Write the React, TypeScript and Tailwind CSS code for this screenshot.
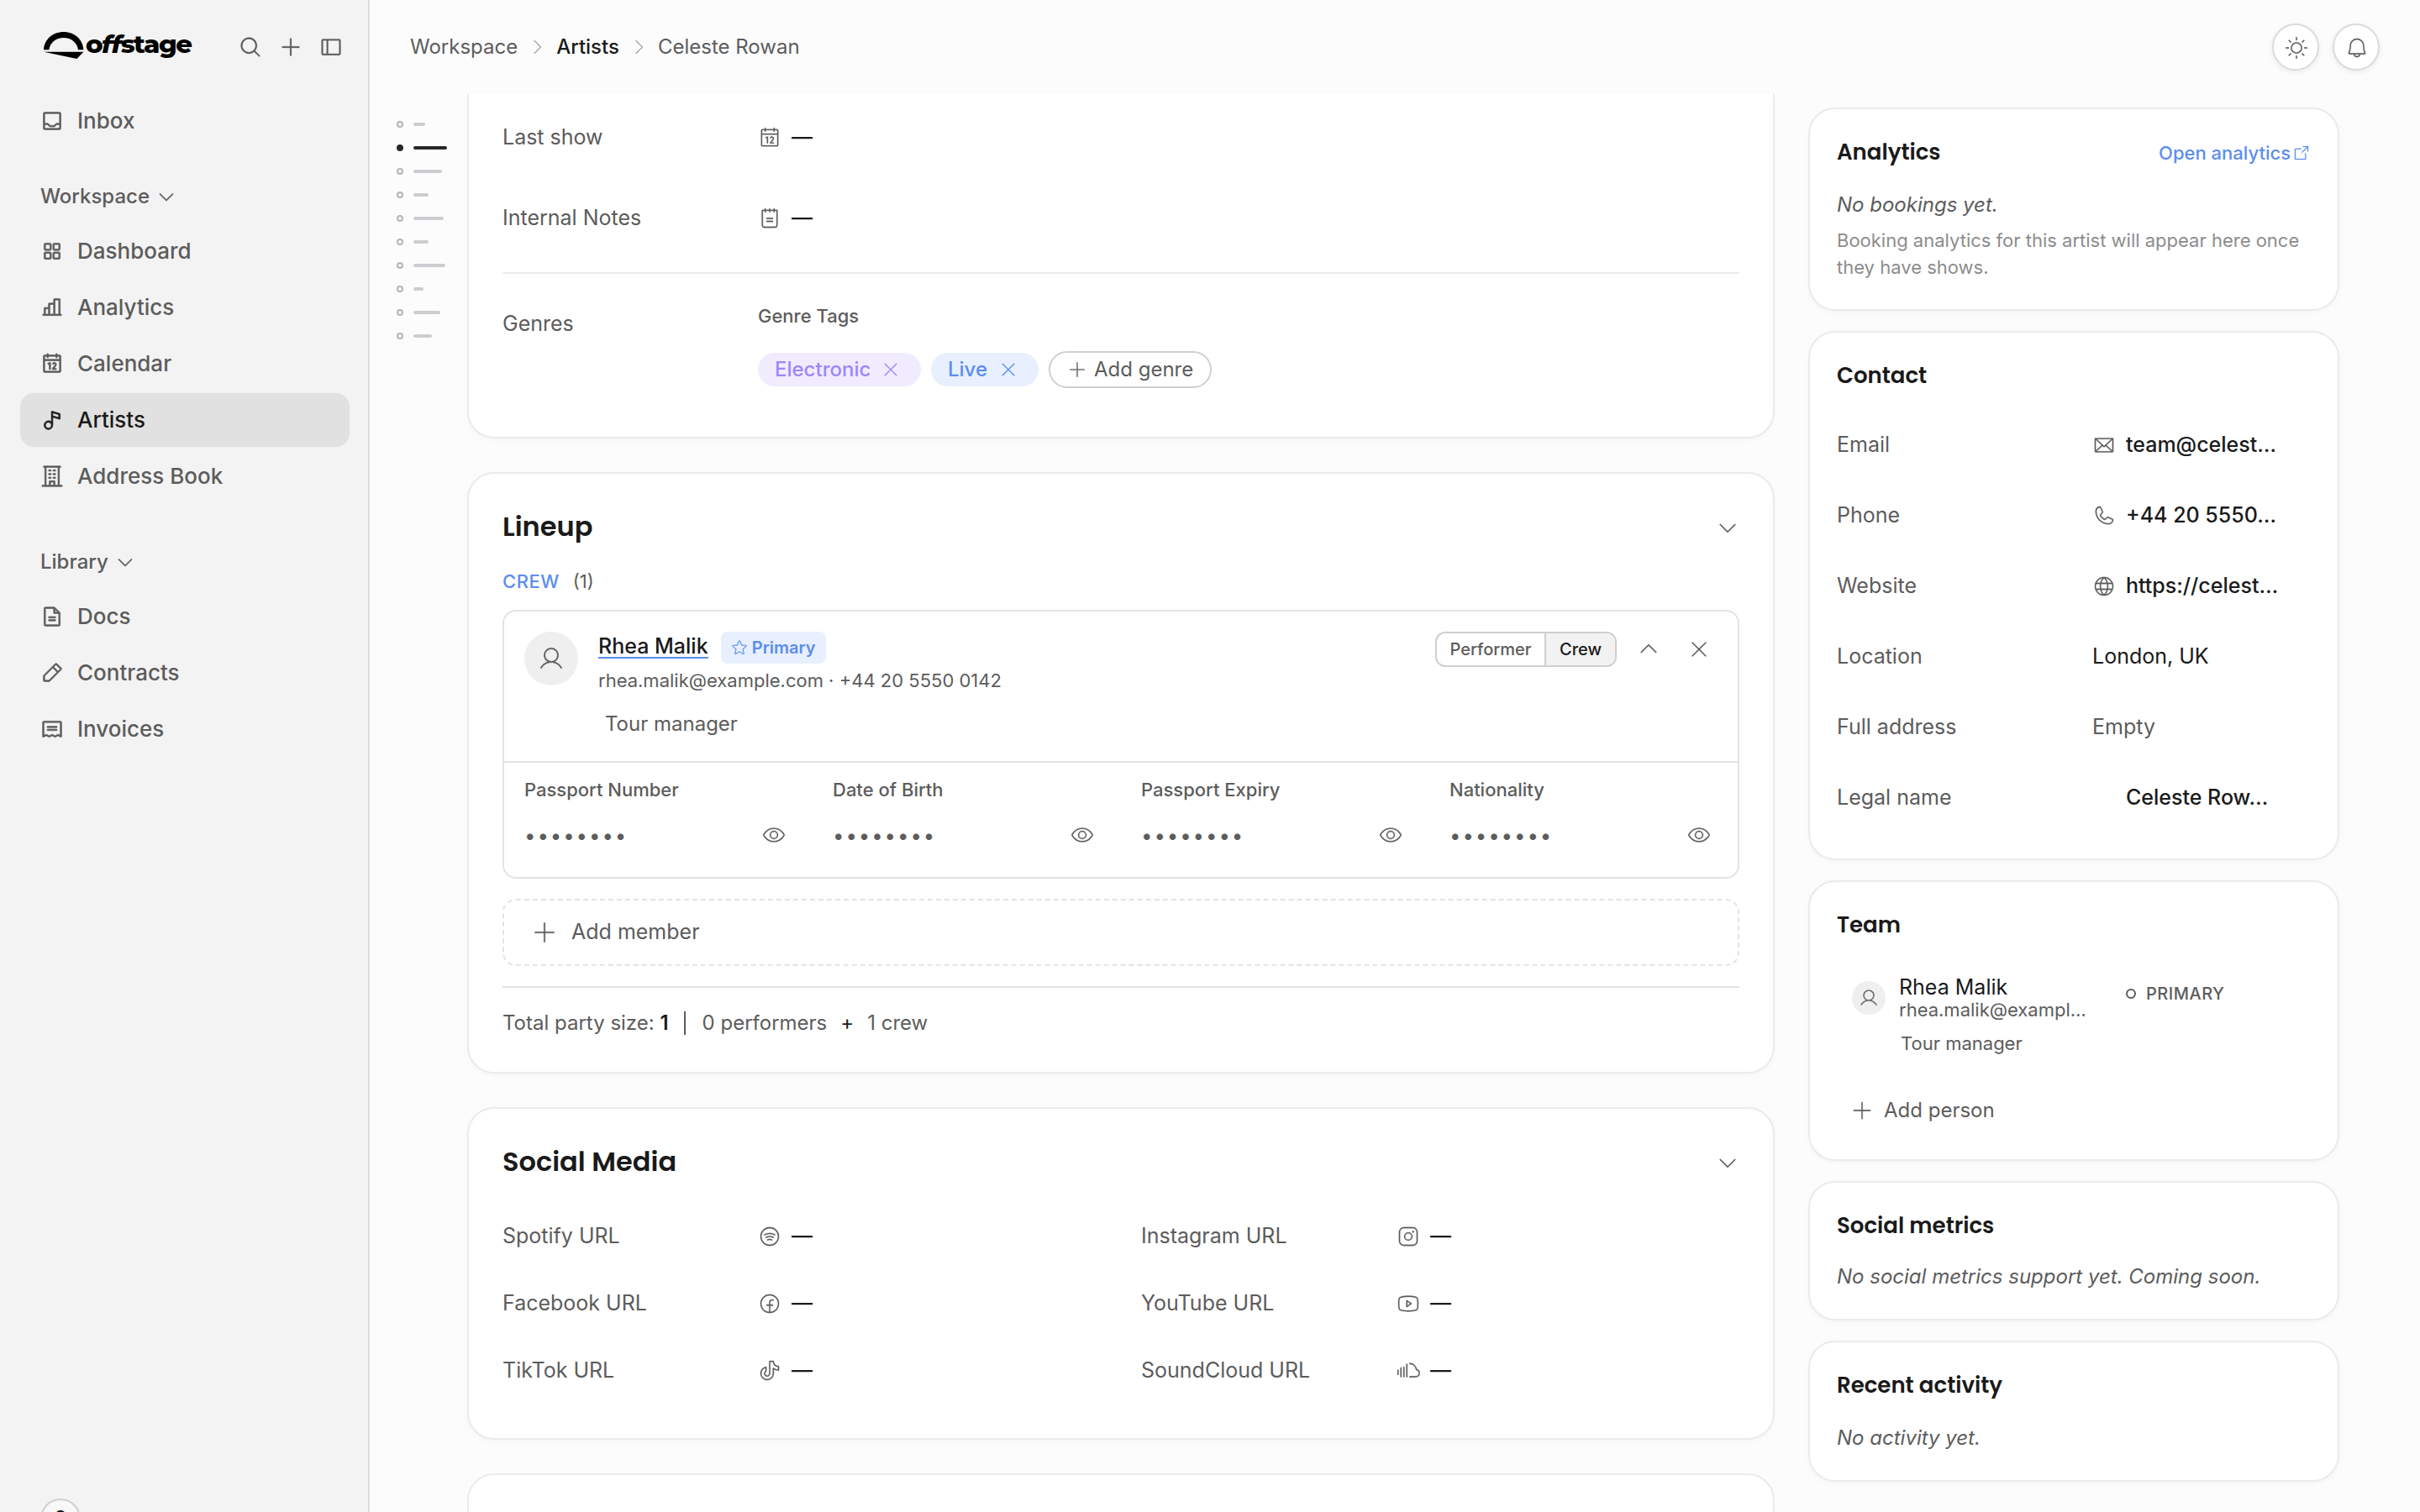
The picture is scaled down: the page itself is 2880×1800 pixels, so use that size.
import type { ReactNode } from "react";
import type { IconType } from "react-icons";
import { clsx } from "clsx";
import {
  PiArrowSquareOutLight,
  PiBellLight,
  PiBuilding,
  PiCalendar,
  PiCalendarLight,
  PiCaretDown,
  PiCaretDownLight,
  PiCaretRightLight,
  PiCaretUpLight,
  PiChartBar,
  PiEnvelopeLight,
  PiEyeLight,
  PiFacebookLogoLight,
  PiFileText,
  PiGlobeLight,
  PiInstagramLogoLight,
  PiMagnifyingGlass,
  PiMusicNote,
  PiNotepadLight,
  PiPencilSimple,
  PiPhoneLight,
  PiPlus,
  PiPlusLight,
  PiReceipt,
  PiSidebarSimple,
  PiSoundcloudLogoLight,
  PiSpotifyLogoLight,
  PiSquaresFour,
  PiStarLight,
  PiSunLight,
  PiTiktokLogoLight,
  PiTray,
  PiUserLight,
  PiXLight,
  PiYoutubeLogoLight,
} from "react-icons/pi";

type NavItem = { label: string; icon: IconType; active?: boolean };

const workspaceNav: NavItem[] = [
  { label: "Dashboard", icon: PiSquaresFour },
  { label: "Analytics", icon: PiChartBar },
  { label: "Calendar", icon: PiCalendar },
  { label: "Artists", icon: PiMusicNote, active: true },
  { label: "Address Book", icon: PiBuilding },
];

const libraryNav: NavItem[] = [
  { label: "Docs", icon: PiFileText },
  { label: "Contracts", icon: PiPencilSimple },
  { label: "Invoices", icon: PiReceipt },
];

const outline = [
  { width: 14 },
  { width: 40, active: true },
  { width: 34 },
  { width: 18 },
  { width: 36 },
  { width: 18 },
  { width: 38 },
  { width: 12 },
  { width: 32 },
  { width: 22 },
];

const socialLinks = [
  { label: "Spotify URL", icon: PiSpotifyLogoLight },
  { label: "Instagram URL", icon: PiInstagramLogoLight },
  { label: "Facebook URL", icon: PiFacebookLogoLight },
  { label: "YouTube URL", icon: PiYoutubeLogoLight },
  { label: "TikTok URL", icon: PiTiktokLogoLight },
  { label: "SoundCloud URL", icon: PiSoundcloudLogoLight },
];

const passportFields = ["Passport Number", "Date of Birth", "Passport Expiry", "Nationality"];

export default function App() {
  return (
    <div className="flex h-[1800px] w-[2880px] overflow-hidden bg-[#fcfcfc] font-[Inter,sans-serif] text-[#5c5c5c] [&_svg]:[stroke-width:3px]">
      <Sidebar />
      <div className="flex min-w-0 flex-1 flex-col">
        <TopBar />
        <div className="flex min-h-0 flex-1 overflow-hidden">
          <Outline />
          <main className="flex w-[1556px] shrink-0 flex-col gap-10">
            <OverviewCard />
            <LineupCard />
            <SocialMediaCard />
            <section className="h-40 shrink-0 rounded-[32px] border-2 border-[#ebebeb] bg-white" />
          </main>
          <aside className="ml-10 flex w-[632px] flex-col gap-6 pt-4">
            <AnalyticsCard />
            <ContactCard />
            <TeamCard />
            <SideCard title="Social metrics" className="h-[166px]">
              <p className="mt-[25px] text-[24px] leading-8 italic">
                No social metrics support yet. Coming soon.
              </p>
            </SideCard>
            <SideCard title="Recent activity" className="h-[168px]">
              <p className="mt-[27px] text-[24px] leading-8 italic">No activity yet.</p>
            </SideCard>
          </aside>
        </div>
      </div>
    </div>
  );
}

function Sidebar() {
  return (
    <aside className="flex w-[440px] shrink-0 flex-col border-r-2 border-[#dedede] bg-[#f3f3f3]">
      <div className="flex h-28 shrink-0 items-center justify-between pr-[30px] pl-[52px]">
        <Logo />
        <div className="flex items-center gap-5 text-[28px]">
          <PiMagnifyingGlass />
          <PiPlus />
          <PiSidebarSimple />
        </div>
      </div>
      <div className="px-6">
        <NavRow label="Inbox" icon={PiTray} />
      </div>
      <NavGroup title="Workspace" items={workspaceNav} className="mt-[29px]" />
      <NavGroup title="Library" items={libraryNav} className="mt-[41px]" />
      <div className="mt-auto mb-[-32px] ml-12 flex size-12 shrink-0 items-center justify-center rounded-full border-2 border-[#cfcfcf] bg-[#f8f8f8] text-[24px] font-semibold text-[#1a1a1a]">
        ?
      </div>
    </aside>
  );
}

function Logo() {
  return (
    <div className="mb-1 flex items-center text-black">
      <svg width="48" height="32" viewBox="0 0 48 32" fill="currentColor">
        <path d="M0 21.300C0.600 9 10.500 0 23.700 0S46.800 9 47.400 21.300H41C40 13 33 7 23.700 7S7.400 13 6.400 21.300Z" />
        <path d="M0 23.700H47.400L39.500 32Z" />
      </svg>
      <span className="mb-0.5 ml-[2px] w-[127px] origin-left scale-x-[1.1] font-[Montserrat,sans-serif] text-[28px] leading-8 font-extrabold tracking-[-1.3px]">
        o<span className="italic">ff</span>stage
      </span>
    </div>
  );
}

function NavGroup({
  title,
  items,
  className,
}: {
  title: string;
  items: NavItem[];
  className?: string;
}) {
  return (
    <div className={className}>
      <div className="flex h-14 items-center gap-2 pt-px pl-12 text-[24px] font-medium">
        {title}
        <PiCaretDown />
      </div>
      <div className="mt-1.5 flex flex-col gap-[3px] pr-[22px] pl-6">
        {items.map((item) => (
          <NavRow key={item.label} {...item} />
        ))}
      </div>
    </div>
  );
}

function NavRow({ label, icon: Icon, active }: NavItem) {
  return (
    <div
      className={clsx("flex h-16 items-center gap-4 rounded-2xl px-6 text-[26px] font-medium", {
        "bg-[#e1e1e1] text-[#1a1a1a]": active,
      })}
    >
      <Icon className="text-[28px] [stroke-width:6px]!" />
      <span className="pb-0.5">{label}</span>
    </div>
  );
}

function TopBar() {
  return (
    <header className="flex h-28 shrink-0 items-center justify-between pr-12 pl-12">
      <nav className="flex items-center gap-[11px] text-[24px]">
        <span>Workspace</span>
        <PiCaretRightLight className="text-[#a5a5b0]" />
        <span className="font-medium text-[#1a1a1a]">Artists</span>
        <PiCaretRightLight className="text-[#a5a5b0]" />
        <span>Celeste Rowan</span>
      </nav>
      <div className="flex gap-4">
        <RoundButton icon={PiSunLight} />
        <RoundButton icon={PiBellLight} />
      </div>
    </header>
  );
}

function RoundButton({ icon: Icon }: { icon: IconType }) {
  return (
    <button
      type="button"
      className="flex size-14 items-center justify-center rounded-full border-2 border-[#dcdcdc] bg-white pt-0.5 pl-0.5 text-[28px] shadow-[0_2px_6px_rgba(0,0,0,0.08)]"
    >
      <Icon />
    </button>
  );
}

function Outline() {
  return (
    <div className="flex w-[116px] shrink-0 flex-col pt-[22px] pl-8">
      {outline.map(({ width, active }, index) => (
        <div key={index} className="flex h-7 items-center gap-3">
          <span
            className={clsx(
              "size-2 rounded-full border-2",
              active ? "border-[#272727] bg-[#272727]" : "border-[#b4b4b8]"
            )}
          />
          <span
            className={clsx("h-1 rounded-full", active ? "bg-[#272727]" : "bg-[#cdcdd1]")}
            style={{ width }}
          />
        </div>
      ))}
    </div>
  );
}

function OverviewCard() {
  return (
    <section className="h-[410px] shrink-0 rounded-b-[32px] border-2 border-t-0 border-[#ebebeb] bg-white px-10 pt-1 shadow-[0_2px_6px_rgba(0,0,0,0.03)]">
      <EmptyField label="Last show" icon={PiCalendarLight} className="h-24" />
      <EmptyField label="Internal Notes" icon={PiNotepadLight} className="h-24" />
      <div className="mt-4 flex border-t-2 border-[#ebebeb]">
        <span className="w-[304px] pt-[43px] text-[25px] leading-8">Genres</span>
        <div className="pt-[34px]">
          <div className="text-[22px] leading-8 font-medium">Genre Tags</div>
          <div className="mt-[26px] flex items-center gap-3 text-[24px] font-medium">
            <span className="flex h-10 w-[194px] items-center justify-between rounded-full bg-[#f0ecfe] pr-6 pl-5 text-[#9d86fb]">
              Electronic <PiXLight />
            </span>
            <span className="flex h-10 w-32 items-center justify-between rounded-full bg-[#e8effe] pr-6 pl-5 text-[#5b8def]">
              Live <PiXLight />
            </span>
            <button
              type="button"
              className="flex h-11 w-[194px] items-center gap-2 rounded-full border-2 border-[#cfcfcf] bg-white pl-5 font-normal whitespace-nowrap"
            >
              <PiPlusLight className="shrink-0" /> Add genre
            </button>
          </div>
        </div>
      </div>
    </section>
  );
}

function EmptyField({
  label,
  icon: Icon,
  className,
}: {
  label: string;
  icon: IconType;
  className?: string;
}) {
  return (
    <div className={clsx("flex items-center", className)}>
      <span className="w-[304px] text-[25px]">{label}</span>
      <Icon className="text-[28px]" />
      <span className="ml-3 text-[25px] font-medium text-[#1a1a1a]">—</span>
    </div>
  );
}

function CardTitle({ children }: { children: ReactNode }) {
  return (
    <div className="flex h-[66px] items-center justify-between">
      <h2 className="font-[Poppins,Inter,sans-serif] text-[32px] font-semibold text-[#1a1a1a]">
        {children}
      </h2>
      <PiCaretDownLight className="mt-0.5 text-[28px]" />
    </div>
  );
}

function LineupCard() {
  return (
    <section className="h-[716px] shrink-0 rounded-[32px] border-2 border-[#ebebeb] bg-white px-10 pt-[30px] shadow-[0_2px_6px_rgba(0,0,0,0.03)]">
      <CardTitle>Lineup</CardTitle>
      <div className="mt-4 flex gap-4 text-[22px] leading-8">
        <span className="font-medium tracking-[0.5px] text-[#5b8def]">CREW</span>
        <span>(1)</span>
      </div>

      <div className="mt-[18px] h-80 rounded-2xl border-2 border-[#e3e3e3]">
        <div className="flex h-[178px] px-6 pt-6">
          <div className="flex size-16 items-center justify-center rounded-full bg-[#efefef] text-[32px]">
            <PiUserLight />
          </div>
          <div className="ml-6 flex-1">
            <div className="flex h-[38px] items-center gap-[15px]">
              <span className="mb-1 h-[30px] border-b-2 border-[#5b8def] text-[25px] leading-[30px] font-medium text-[#1a1a1a]">
                Rhea Malik
              </span>
              <span className="flex h-[38px] w-[125px] items-center justify-center gap-[5px] rounded-lg bg-[#e8effe] text-[20px] font-semibold text-[#5b8def]">
                <PiStarLight /> Primary
              </span>
            </div>
            <div className="mt-1 text-[22px] leading-8">
              rhea.malik@example.com · +44 20 5550 0142
            </div>
            <div className="mt-5 pl-2 text-[24px] leading-8">Tour manager</div>
          </div>
          <div className="flex h-[42px] items-center">
            <div className="flex h-[42px] overflow-hidden rounded-xl border-2 border-[#cfcfcf] text-[20px] leading-[38px] font-medium">
              <span className="w-[130px] border-r-2 border-[#cfcfcf] text-center">Performer</span>
              <span className="w-[82px] bg-[#f2f2f2] text-center text-[#1a1a1a]">Crew</span>
            </div>
            <PiCaretUpLight className="ml-6 text-[28px]" />
            <PiXLight className="mr-2 ml-8 text-[28px]" />
          </div>
        </div>
        <div className="grid grid-cols-4 gap-x-12 border-t-2 border-[#e3e3e3] px-6 pt-4">
          {passportFields.map((field) => (
            <div key={field}>
              <div className="text-[22px] leading-8 font-medium">{field}</div>
              <div className="mt-[18px] flex h-10 items-center justify-between pr-2">
                <span className="pt-0.5 text-[24px] tracking-[1.9px]">••••••••</span>
                <PiEyeLight className="text-[28px]" />
              </div>
            </div>
          ))}
        </div>
      </div>

      <button
        type="button"
        className="mt-6 flex h-20 w-full items-center gap-4 rounded-2xl border-2 border-dashed border-[#e3e3e3] pl-8 text-[25px]"
      >
        <PiPlusLight className="text-[32px]" />
        Add member
      </button>

      <div className="mt-6 flex items-center border-t-2 border-[#e3e3e3] pt-[26px] text-[24px] leading-8">
        <span>
          Total party size: <span className="font-semibold text-[#1a1a1a]">1</span>
        </span>
        <span className="ml-[18px] h-7 w-0.5 bg-[#5c5c5c]" />
        <span className="ml-5">0 performers</span>
        <span className="ml-4 text-[#1a1a1a]">+</span>
        <span className="ml-4">1 crew</span>
      </div>
    </section>
  );
}

function SocialMediaCard() {
  return (
    <section className="h-[396px] shrink-0 rounded-[32px] border-2 border-[#ebebeb] bg-white px-10 pt-[30px] shadow-[0_2px_6px_rgba(0,0,0,0.03)]">
      <CardTitle>Social Media</CardTitle>
      <div className="mt-4 grid grid-cols-2 gap-x-12">
        {socialLinks.map((link) => (
          <EmptyField key={link.label} {...link} className="h-20" />
        ))}
      </div>
    </section>
  );
}

function SideCard({
  title,
  action,
  className,
  children,
}: {
  title: string;
  action?: ReactNode;
  className?: string;
  children: ReactNode;
}) {
  return (
    <section
      className={clsx(
        "shrink-0 rounded-[32px] border-2 border-[#ebebeb] bg-white px-8 pt-[31px] shadow-[0_2px_6px_rgba(0,0,0,0.03)]",
        className
      )}
    >
      <div className="flex h-10 items-center justify-between">
        <h3 className="font-[Poppins,Inter,sans-serif] text-[26px] font-semibold text-[#1a1a1a]">
          {title}
        </h3>
        {action}
      </div>
      {children}
    </section>
  );
}

function AnalyticsCard() {
  return (
    <SideCard
      title="Analytics"
      className="h-[242px]"
      action={
        <a className="flex items-center gap-0.5 pt-0.5 text-[22px] font-medium text-[#5b8def]">
          Open analytics <PiArrowSquareOutLight />
        </a>
      }
    >
      <p className="mt-[27px] text-[24px] leading-8 italic">No bookings yet.</p>
      <p className="mt-[10px] text-[22px] leading-8 text-[#8c8c8c]">
        Booking analytics for this artist will appear here once they have shows.
      </p>
    </SideCard>
  );
}

function ContactCard() {
  return (
    <SideCard title="Contact" className="h-[630px]">
      <div className="mt-[21px] flex flex-col">
        <ContactRow label="Email" icon={PiEnvelopeLight} value="team@celest…" />
        <ContactRow label="Phone" icon={PiPhoneLight} value="+44 20 5550…" />
        <ContactRow label="Website" icon={PiGlobeLight} value="https://celest…" />
        <ContactRow label="Location">
          <span className="text-[#1a1a1a]">London, UK</span>
        </ContactRow>
        <ContactRow label="Full address">Empty</ContactRow>
        <ContactRow label="Legal name">
          <span className="pl-10 font-medium text-[#1a1a1a]">Celeste Row…</span>
        </ContactRow>
      </div>
    </SideCard>
  );
}

function ContactRow({
  label,
  icon: Icon,
  value,
  children,
}: {
  label: string;
  icon?: IconType;
  value?: string;
  children?: ReactNode;
}) {
  return (
    <div className="flex h-[84px] items-center text-[25px]">
      <span className="w-[304px]">{label}</span>
      {Icon && <Icon className="mr-3 text-[28px]" />}
      {value && <span className="font-medium text-[#1a1a1a]">{value}</span>}
      {children}
    </div>
  );
}

function TeamCard() {
  return (
    <SideCard title="Team" className="h-[334px]">
      <div className="mt-[39px] flex pl-[18px]">
        <div className="mt-2 flex size-10 items-center justify-center rounded-full bg-[#efefef] text-[24px]">
          <PiUserLight />
        </div>
        <div className="ml-4 w-[270px]">
          <div className="text-[25px] leading-[30px] text-[#1a1a1a]">Rhea Malik</div>
          <div className="text-[22px] leading-6">rhea.malik@exampl…</div>
          <div className="mt-3 pl-0.5 text-[22px] leading-8">Tour manager</div>
        </div>
        <div className="mt-0.5 flex h-[42px] items-center gap-3 text-[20px] font-medium tracking-[0.5px]">
          <span className="size-3 rounded-full border-2 border-[#5c5c5c]" />
          PRIMARY
        </div>
      </div>
      <div className="mt-12 flex items-center gap-3 pl-4 text-[24px] leading-8">
        <PiPlusLight className="text-[28px]" />
        Add person
      </div>
    </SideCard>
  );
}
